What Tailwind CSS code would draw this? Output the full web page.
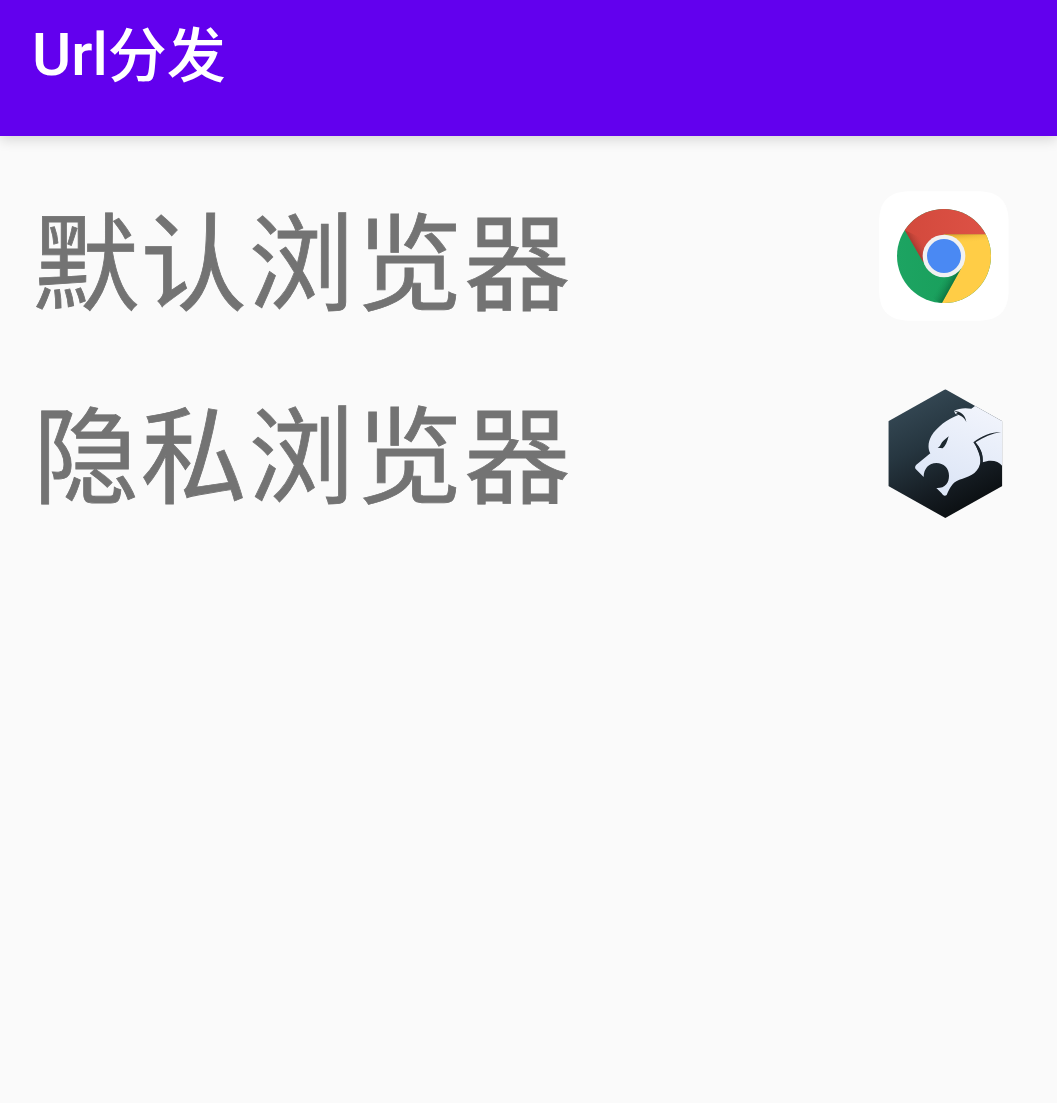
<!DOCTYPE html>
<html lang="zh-CN">
<head>
<meta charset="utf-8">
<title>Url分发</title>
<script src="https://cdn.jsdelivr.net/npm/@tailwindcss/browser@4"></script>
</head>
<body class="min-h-screen bg-[#fafafa] font-['Roboto','Noto_Sans_CJK_SC',sans-serif]">
<header class="h-[136px] bg-[#6200ee] pl-[32px] pt-[11px] shadow-[0_4px_12px_rgba(0,0,0,0.14)]">
  <h1 class="flex items-baseline text-[60px] leading-[88px] font-medium text-white whitespace-nowrap"><span>Url</span><span class="translate-y-[2px] text-[59px]">分发</span></h1>
</header>
<main class="flex flex-col gap-[49px] pt-[48px] pl-[33px] pr-[41px]">
  <div class="flex h-[144px] items-center justify-between">
    <span class="text-[106px] leading-[144px] tracking-[1.8px] text-[#737373] whitespace-nowrap font-['Noto_Sans_CJK_SC',sans-serif] [-webkit-text-stroke:0.8px_#737373]">默认浏览器</span>
    <svg class="size-[144px] shrink-0" viewBox="6 12 432 432">
      <defs>
        <clipPath id="disc"><circle cx="222" cy="228" r="141"/></clipPath>
        <linearGradient id="red" x1="0" y1="0" x2="1" y2="0"><stop offset="0" stop-color="#d1483b"/><stop offset="1" stop-color="#de5246"/></linearGradient>
        <linearGradient id="green" x1="0" y1="0" x2="1" y2="0"><stop offset="0" stop-color="#1da462"/><stop offset="1" stop-color="#169c58"/></linearGradient>
        <linearGradient id="yshade" gradientUnits="userSpaceOnUse" x1="0" y1="163" x2="0" y2="188"><stop offset="0" stop-color="#c88a1b" stop-opacity=".65"/><stop offset="1" stop-color="#ffcd46" stop-opacity="0"/></linearGradient>
        <linearGradient id="yfade" gradientUnits="userSpaceOnUse" x1="250" y1="0" x2="345" y2="0"><stop offset="0" stop-color="#ffcd46" stop-opacity="0"/><stop offset="1" stop-color="#ffcd46" stop-opacity=".65"/></linearGradient>
        <linearGradient id="rshade" gradientUnits="userSpaceOnUse" x1="131" y1="197" x2="158" y2="181"><stop offset="0" stop-color="#7b2a22" stop-opacity=".5"/><stop offset="1" stop-color="#c84a3f" stop-opacity="0"/></linearGradient>
        <linearGradient id="gshade" gradientUnits="userSpaceOnUse" x1="244" y1="318" x2="213" y2="300"><stop offset="0" stop-color="#064d2a" stop-opacity=".5"/><stop offset="1" stop-color="#179b59" stop-opacity="0"/></linearGradient>
      </defs>
      <path d="M27 130C27 62 56 34 124 34H320C388 34 416 62 416 130V326C416 394 388 422 320 422H124C56 422 27 394 27 326Z" fill="#fff"/>
      <g clip-path="url(#disc)">
        <rect x="80" y="86" width="284" height="284" fill="url(#green)"/>
        <path d="M277 259L213 374H370V163H222Z" fill="#ffcd46"/>
        <path d="M222 163H364L350 176L280 190Z" fill="url(#yshade)"/>
        <path d="M222 163H364L350 176L280 190Z" fill="url(#yfade)"/>
        <path d="M104 150L160 247L222 228V163H364V80H70Z" fill="url(#red)"/>
        <path d="M104 150L160 247L190 210L170 182Z" fill="url(#rshade)"/>
        <path d="M277 259L213 374L185 350L232 285Z" fill="url(#gshade)"/>
      </g>
      <circle cx="222" cy="228" r="64" fill="#f1f1f1"/>
      <circle cx="222" cy="228" r="51" fill="#4a89f3"/>
    </svg>
  </div>
  <div class="flex h-[144px] items-center justify-between">
    <span class="text-[106px] leading-[144px] tracking-[1.8px] text-[#737373] whitespace-nowrap font-['Noto_Sans_CJK_SC',sans-serif] [-webkit-text-stroke:0.8px_#737373]">隐私浏览器</span>
    <svg class="size-[144px] shrink-0" viewBox="6 -9 432 432">
      <defs>
        <linearGradient id="night" gradientUnits="userSpaceOnUse" x1="120" y1="70" x2="290" y2="390"><stop offset="0" stop-color="#344753"/><stop offset=".35" stop-color="#263640"/><stop offset=".75" stop-color="#151c22"/><stop offset="1" stop-color="#0b0f12"/></linearGradient>
        <linearGradient id="fur" gradientUnits="userSpaceOnUse" x1="330" y1="80" x2="230" y2="320"><stop offset="0" stop-color="#f1f4fc"/><stop offset="1" stop-color="#dde6f6"/></linearGradient>
        <clipPath id="hex"><path d="M226 28L397 124V318L226 414L55 318V124Z"/></clipPath>
      </defs>
      <g clip-path="url(#hex)">
        <rect x="50" y="20" width="352" height="400" fill="url(#night)"/>
        <path d="M252 93C266 84 286 83 304 86L326 70L410 110V266L397 258C385 241 360 238 338 247C340 219 329 202 315 190C325 217 334 232 330 252C321 284 294 291 268 299C246 307 239 325 230 345C224 350 219 346 215 340L199 324C225 325 237 309 237 287C237 264 221 249 199 249C177 249 161 266 161 291L137 267C134 262 135 258 139 254L181 220C172 204 175 184 184 168C201 140 232 118 265 105L256 101Z" fill="url(#fur)"/>
        <path d="M252 93C273 94 286 105 289 126C282 111 271 106 257 102L263 98Z" fill="#1e2930"/>
        <path d="M236 169C232 185 226 199 218 205L203 203C211 200 211 194 216 187C221 180 229 176 236 169Z" fill="#1d2930"/>
        <path d="M393 156C365 161 341 171 317 187C331 204 340 222 338 248L332 250C333 225 324 207 310 187C335 168 363 156 393 156Z" fill="#1d262e"/>
      </g>
    </svg>
  </div>
</main>
</body>
</html>
